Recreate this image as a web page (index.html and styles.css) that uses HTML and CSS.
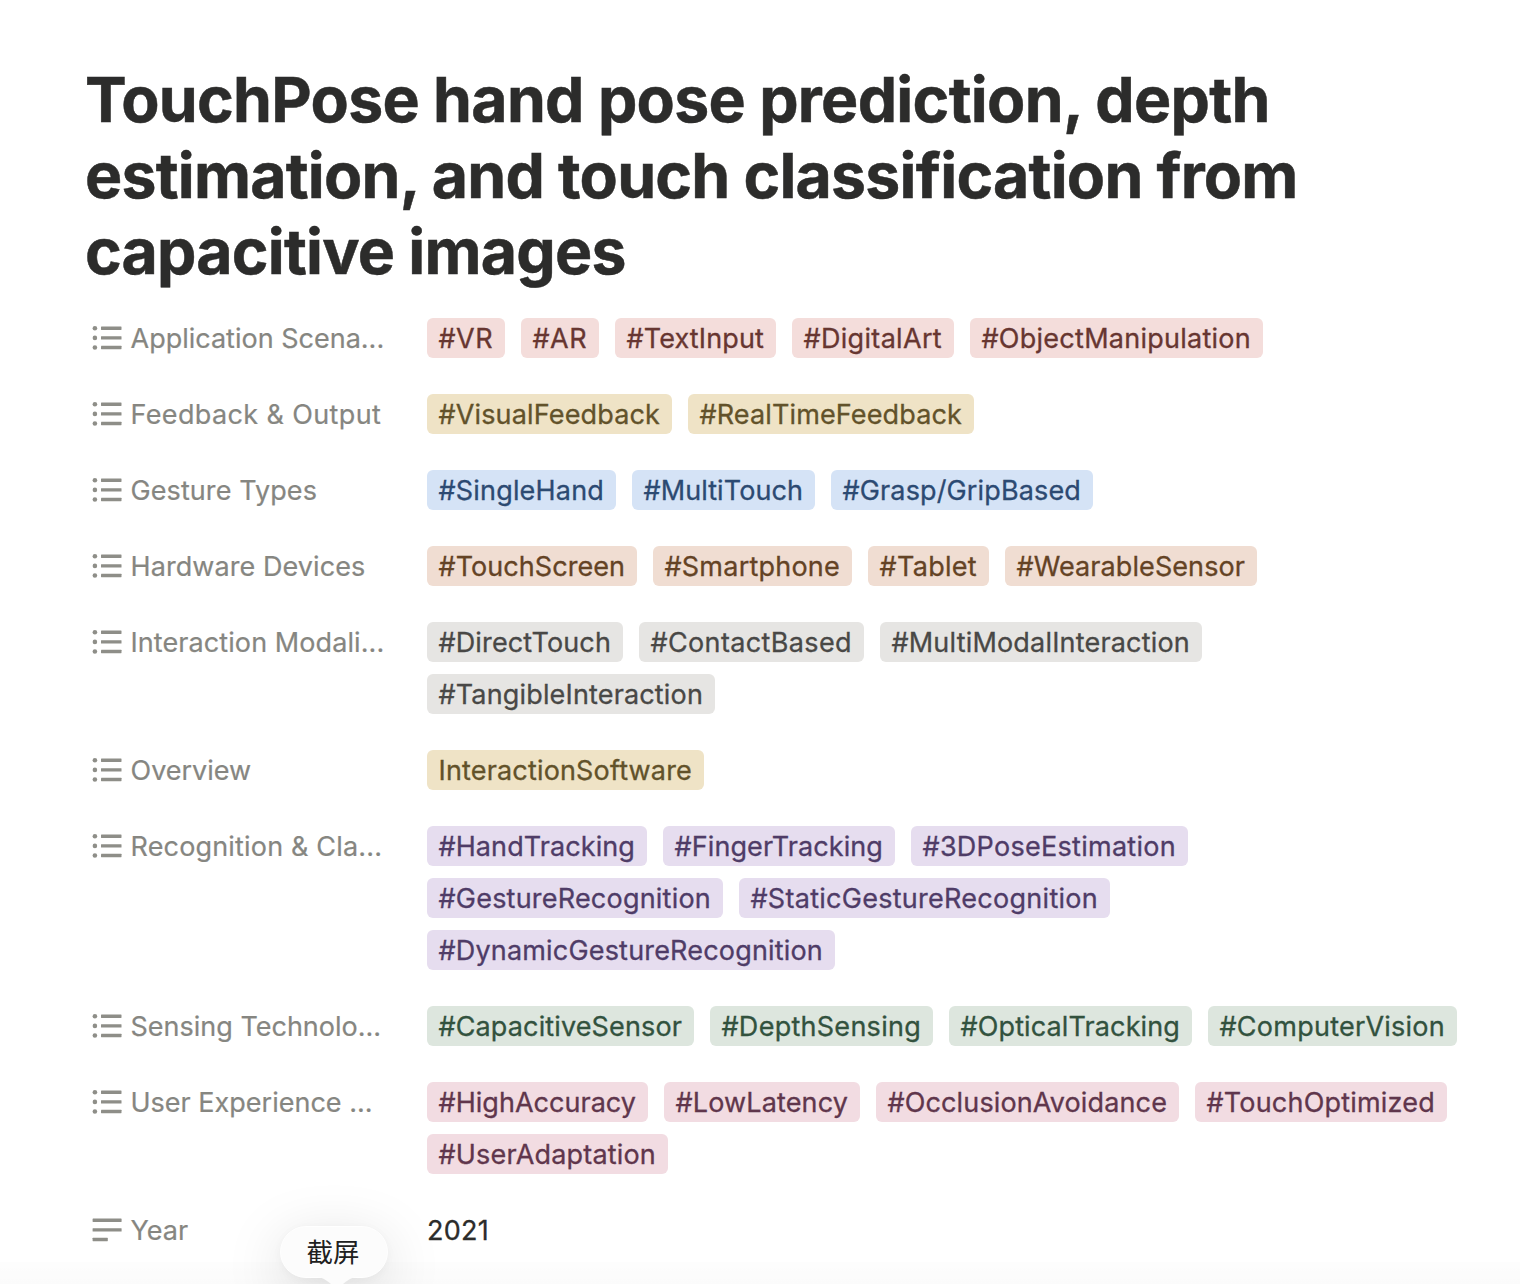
FILE: index.html
```html
<!DOCTYPE html>
<html lang="en">
<head>
<meta charset="utf-8">
<title>TouchPose</title>
<link rel="stylesheet" href="styles.css">
</head>
<body>
<svg class="sprite" aria-hidden="true">
  <symbol id="list" viewBox="0 0 30 26"><circle cx="2.9" cy="3.2" r="2.3"/><circle cx="2.9" cy="12.9" r="2.3"/><circle cx="2.9" cy="22.5" r="2.3"/><rect x="9" y="1.5" width="20.5" height="3.4" rx=".4"/><rect x="9" y="11.2" width="20.5" height="3.4" rx=".4"/><rect x="9" y="20.8" width="20.5" height="3.4" rx=".4"/></symbol>
  <symbol id="text" viewBox="0 0 30 26"><rect x=".6" y="1.5" width="29" height="3.4" rx=".4"/><rect x=".6" y="11.2" width="29" height="3.4" rx=".4"/><rect x=".6" y="20.8" width="15.2" height="3.4" rx=".4"/></symbol>
</svg>
<main class="page">
  <h1 class="title"><span class="line line-1">TouchPose hand pose prediction, depth</span> <span class="line line-2">estimation, and touch classification from</span> <span class="line line-3">capacitive images</span></h1>
  <div class="properties">
    <div class="row red"><div class="name"><svg class="icon"><use href="#list"/></svg><span>Application Scena...</span></div><div class="tags"><span class="tag" data-w="78">#VR</span><span class="tag" data-w="78">#AR</span><span class="tag" data-w="161">#TextInput</span><span class="tag" data-w="162">#DigitalArt</span><span class="tag" data-w="293">#ObjectManipulation</span></div></div>
    <div class="row yellow"><div class="name loose"><svg class="icon"><use href="#list"/></svg><span>Feedback &amp; Output</span></div><div class="tags"><span class="tag" data-w="245">#VisualFeedback</span><span class="tag" data-w="286">#RealTimeFeedback</span></div></div>
    <div class="row blue"><div class="name open"><svg class="icon"><use href="#list"/></svg><span>Gesture Types</span></div><div class="tags"><span class="tag" data-w="189">#SingleHand</span><span class="tag" data-w="183">#MultiTouch</span><span class="tag" data-w="262">#Grasp/GripBased</span></div></div>
    <div class="row orange"><div class="name open"><svg class="icon"><use href="#list"/></svg><span>Hardware Devices</span></div><div class="tags"><span class="tag" data-w="210">#TouchScreen</span><span class="tag" data-w="199">#Smartphone</span><span class="tag" data-w="121">#Tablet</span><span class="tag" data-w="252">#WearableSensor</span></div></div>
    <div class="row gray"><div class="name open"><svg class="icon"><use href="#list"/></svg><span>Interaction Modali...</span></div><div class="tags"><span class="tag" data-w="196">#DirectTouch</span><span class="tag" data-w="225">#ContactBased</span><span class="tag" data-w="322">#MultiModalInteraction</span><span class="tag" data-w="288">#TangibleInteraction</span></div></div>
    <div class="row yellow"><div class="name"><svg class="icon"><use href="#list"/></svg><span>Overview</span></div><div class="tags"><span class="tag" data-w="277">InteractionSoftware</span></div></div>
    <div class="row purple"><div class="name wide"><svg class="icon"><use href="#list"/></svg><span>Recognition &amp; Cla...</span></div><div class="tags"><span class="tag" data-w="220">#HandTracking</span><span class="tag" data-w="232">#FingerTracking</span><span class="tag" data-w="277">#3DPoseEstimation</span><span class="tag" data-w="296">#GestureRecognition</span><span class="tag" data-w="371">#StaticGestureRecognition</span><span class="tag" data-w="408">#DynamicGestureRecognition</span></div></div>
    <div class="row green"><div class="name"><svg class="icon"><use href="#list"/></svg><span>Sensing Technolo...</span></div><div class="tags"><span class="tag" data-w="267">#CapacitiveSensor</span><span class="tag" data-w="223">#DepthSensing</span><span class="tag" data-w="243">#OpticalTracking</span><span class="tag" data-w="249">#ComputerVision</span></div></div>
    <div class="row pink"><div class="name"><svg class="icon"><use href="#list"/></svg><span>User Experience ...</span></div><div class="tags"><span class="tag" data-w="221">#HighAccuracy</span><span class="tag" data-w="196">#LowLatency</span><span class="tag" data-w="303">#OcclusionAvoidance</span><span class="tag" data-w="252">#TouchOptimized</span><span class="tag" data-w="241">#UserAdaptation</span></div></div>
    <div class="row"><div class="name"><svg class="icon"><use href="#text"/></svg><span>Year</span></div><div class="value">2021</div></div>
  </div>
</main>
<div class="dock-shade"></div>
<div class="tooltip">截屏<svg class="tail" viewBox="0 0 44 10"><path d="M0 0C9 0 12 4 22 12C32 4 35 0 44 0Z"/></svg></div>
<script src="tags.js"></script>
</body>
</html>
```

FILE: styles.css
```css
* { box-sizing: border-box; }
body { margin: 0; height: 1284px; overflow: hidden; position: relative; background: #fff; color: #2c2c2b; font-family: Inter, "Noto Sans CJK SC", sans-serif; }
.sprite { display: none; }
.page { padding: 61px 40px 0 85px; }
.title { margin: 0; font-size: 62.5px; line-height: 76px; font-weight: 700; letter-spacing: -.78px; -webkit-text-stroke: .5px currentColor; }
.line { display: block; white-space: nowrap; }
.line-1 { letter-spacing: -.7px; }
.properties { display: flex; flex-direction: column; gap: 36px; padding: 29px 0 0 1px; }
.row { display: flex; align-items: flex-start; }
.name { display: flex; align-items: center; width: 341px; height: 40px; padding-left: 6px; gap: 8.5px; color: #868681; font-size: 27px; white-space: nowrap; -webkit-text-stroke: .2px currentColor; }
.name.open { letter-spacing: .08px; }
.name.wide { letter-spacing: .17px; }
.name.loose { letter-spacing: .37px; }
.icon { width: 30px; height: 26px; fill: #8e8e88; flex: none; }
.tags { display: flex; flex-wrap: wrap; gap: 12px 16px; flex: 1; }
.tag { height: 40px; line-height: 41px; padding: 0 12px 0 11.5px; border-radius: 6px; font-size: 27px; white-space: nowrap; background: var(--bg); color: var(--fg); -webkit-text-stroke: .3px currentColor; }
.value { height: 40px; line-height: 41px; font-size: 27px; letter-spacing: .3px; -webkit-text-stroke: .3px currentColor; }
.red { --bg: #f4dddb; --fg: #673631; }
.yellow { --bg: #efe3c6; --fg: #62522a; }
.blue { --bg: #d5e3f6; --fg: #2c4a72; }
.orange { --bg: #f0ddd2; --fg: #644325; }
.gray { --bg: #e6e5e3; --fg: #494846; }
.purple { --bg: #e6ddef; --fg: #4f3c67; }
.green { --bg: #dde6de; --fg: #32523e; }
.pink { --bg: #f2dce2; --fg: #60364c; }
.dock-shade { position: absolute; left: 0; right: 0; bottom: 0; height: 22px; background: linear-gradient(rgba(0,0,0,.006), rgba(0,0,0,.014)); }
.tooltip { position: absolute; left: 280px; top: 1226px; width: 108px; height: 52px; border-radius: 26px; background: #fcfcfc; border: 1px solid #fff; box-shadow: 0 14px 60px rgba(0,0,0,.15), 0 2px 10px rgba(0,0,0,.03); font-size: 26.5px; line-height: 51px; padding-right: 2px; text-align: center; color: #202020; }
.tail { position: absolute; left: 34px; top: 50px; width: 44px; height: 10px; fill: #fcfcfc; }
```

FILE: tags.js
```js
// Give each tag its width and spread its letters evenly across it.
document.querySelectorAll('.tag').forEach((tag) => {
  const width = Number(tag.dataset.w);
  const natural = tag.getBoundingClientRect().width;
  tag.style.letterSpacing = `${(width - natural) / tag.textContent.length}px`;
  tag.style.width = `${width}px`;
});
```
